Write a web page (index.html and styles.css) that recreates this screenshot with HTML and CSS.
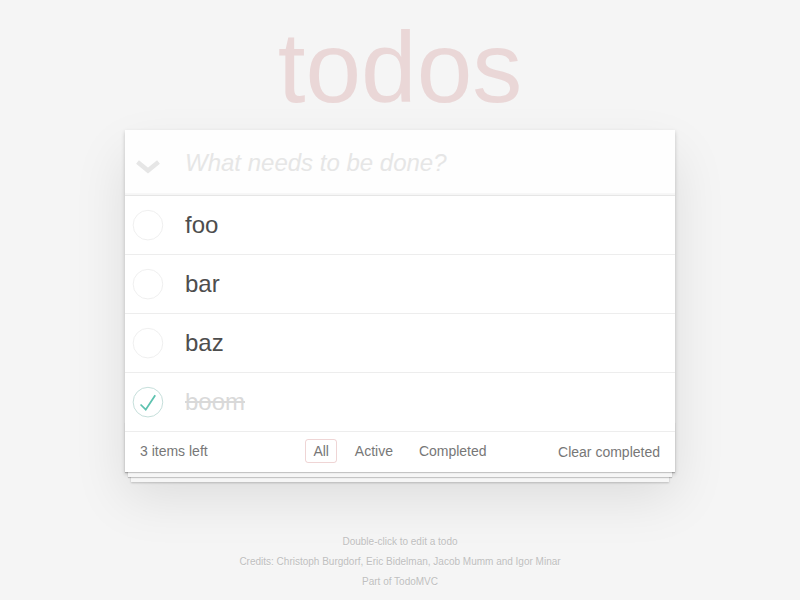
FILE: index.html
```html
<!DOCTYPE html>
<html lang="en">
<head>
<meta charset="utf-8">
<title>todos</title>
<link rel="stylesheet" href="styles.css">
</head>
<body>
<div class="page">
<h1 class="title">todos</h1>
<section class="todoapp">
  <header class="header">
    <div class="toggle-all">
      <svg width="26" height="16" viewBox="0 0 26 16"><polyline points="2.5,3 13,11.5 23.5,3" fill="none" stroke="#e6e6e6" stroke-width="4.5"/></svg>
    </div>
    <input class="new-todo" placeholder="What needs to be done?">
  </header>
  <ul class="todo-list">
    <li class="todo">
      <svg class="toggle" width="40" height="40" viewBox="-10 -18 100 135"><circle cx="50" cy="50" r="50" fill="none" stroke="#ededed" stroke-width="3"/></svg>
      <span class="label">foo</span>
    </li>
    <li class="todo">
      <svg class="toggle" width="40" height="40" viewBox="-10 -18 100 135"><circle cx="50" cy="50" r="50" fill="none" stroke="#ededed" stroke-width="3"/></svg>
      <span class="label">bar</span>
    </li>
    <li class="todo">
      <svg class="toggle" width="40" height="40" viewBox="-10 -18 100 135"><circle cx="50" cy="50" r="50" fill="none" stroke="#ededed" stroke-width="3"/></svg>
      <span class="label">baz</span>
    </li>
    <li class="todo completed">
      <svg class="toggle" width="40" height="40" viewBox="-10 -18 100 135"><circle cx="50" cy="50" r="50" fill="none" stroke="#bddad5" stroke-width="3"/><path fill="#5dc2af" d="M72 25L42 71 27 56l-4 4 20 20 34-52z"/></svg>
      <span class="label">boom</span>
    </li>
  </ul>
  <footer class="footer">
    <span class="todo-count">3 items left</span>
    <div class="filters">
      <a class="filter selected">All</a>
      <a class="filter">Active</a>
      <a class="filter">Completed</a>
    </div>
    <span class="clear-completed">Clear completed</span>
  </footer>
</section>
<footer class="info">
  <p>Double-click to edit a todo</p>
  <p>Credits: Christoph Burgdorf, Eric Bidelman, Jacob Mumm and Igor Minar</p>
  <p>Part of TodoMVC</p>
</footer>
</div>
</body>
</html>
```

FILE: styles.css
```css
html {
  background: #f5f5f5;
}
html, body {
  margin: 0;
  padding: 0;
}
body {
  font-family: "Liberation Sans", Arial, sans-serif;
  font-size: 14px;
  line-height: 1.4em;
  color: #4d4d4d;
  -webkit-font-smoothing: antialiased;
}
.page {
  max-width: 550px;
  margin: 0 auto;
}
.title {
  margin: 0;
  padding-top: 5px;
  height: 125px;
  line-height: 125px;
  font-size: 100px;
  font-weight: 400;
  text-align: center;
  color: rgba(175, 47, 47, 0.15);
}
.todoapp {
  background: #fff;
  margin: 0 0 40px 0;
  box-shadow: 0 2px 4px 0 rgba(0, 0, 0, 0.2), 0 25px 50px 0 rgba(0, 0, 0, 0.1);
}
.header {
  display: flex;
  align-items: stretch;
  height: 65px;
  background: rgba(0, 0, 0, 0.003);
  box-shadow: inset 0 -2px 1px rgba(0, 0, 0, 0.03);
}
.toggle-all {
  width: 60px;
  flex: none;
  display: flex;
  align-items: center;
  padding: 9px 0 0 10px;
  box-sizing: border-box;
}
.toggle-all svg {
  display: block;
}
.new-todo {
  flex: 1;
  min-width: 0;
  border: none;
  outline: none;
  background: transparent;
  margin: 0;
  padding: 0 16px 0 0;
  font-family: inherit;
  font-size: 24px;
  color: inherit;
}
.new-todo::placeholder {
  font-style: italic;
  color: #e6e6e6;
}
.todo-list {
  margin: 0;
  padding: 0;
  list-style: none;
  border-top: 1px solid #e6e6e6;
}
.todo {
  display: flex;
  align-items: center;
  font-size: 24px;
  border-bottom: 1px solid #ededed;
}
.toggle {
  flex: none;
  display: block;
}
.label {
  display: block;
  padding: 15px 15px 15px 20px;
  line-height: 28px;
}
.completed .label {
  color: #d9d9d9;
  text-decoration: line-through;
}
.footer {
  position: relative;
  display: grid;
  grid-template-columns: 1fr auto 1fr;
  align-items: center;
  color: #777;
  padding: 9px 15px 11px;
  height: 20px;
  line-height: 20px;
}
.footer::before {
  content: "";
  position: absolute;
  right: 0;
  bottom: 0;
  left: 0;
  height: 50px;
  overflow: hidden;
  box-shadow: 0 1px 1px rgba(0, 0, 0, 0.2),
              0 8px 0 -3px #f6f6f6,
              0 9px 1px -3px rgba(0, 0, 0, 0.2),
              0 16px 0 -6px #f6f6f6,
              0 17px 2px -6px rgba(0, 0, 0, 0.2);
  pointer-events: none;
}
.todo-count {
  text-align: left;
}
.filters {
  text-align: center;
  white-space: nowrap;
}
.filter {
  color: inherit;
  margin: 3px;
  padding: 3px 7px;
  border: 1px solid transparent;
  border-radius: 3px;
}
.filter.selected {
  border-color: rgba(175, 47, 47, 0.2);
}
.clear-completed {
  text-align: right;
  position: relative;
  top: 1px;
}
.info {
  margin: 65px auto 0;
  color: #bfbfbf;
  font-size: 10px;
  text-shadow: 0 1px 0 rgba(255, 255, 255, 0.5);
  text-align: center;
}
.info p {
  line-height: 1;
  margin: 10px 0;
}
```
